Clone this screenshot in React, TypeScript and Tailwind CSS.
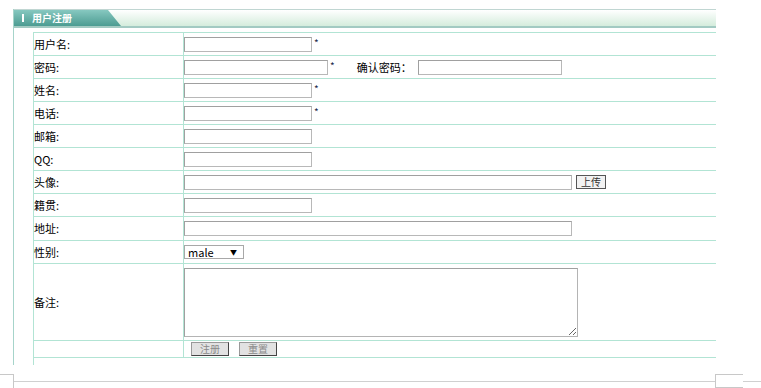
import React from "react";

const font = { fontFamily: '"Noto Sans CJK SC", "Liberation Sans", sans-serif' };

function Row({ label, h = "h-[23px]", children }: { label: string; h?: string; children?: React.ReactNode }) {
  return (
    <div className={`flex ${h} border-b border-[#b2e4d4]`}>
      <div className="flex w-[149px] items-center text-[11px] text-black">{label}</div>
      <div className="flex flex-1 items-center border-l border-[#b2e4d4]">{children}</div>
    </div>
  );
}

function Field({ w }: { w: string }) {
  return (
    <input
      className={`${w} h-[15px] border border-[#b8b8b8] border-l-[#a0a0a0] border-t-[#a0a0a0] bg-white outline-none`}
    />
  );
}

function Star() {
  return <span className="ml-[2px] -mt-[2px] text-[10px] leading-none text-[#1a2a4a]">*</span>;
}

export default function App() {
  return (
    <div className="relative h-[388px] w-[761px] overflow-hidden bg-white pt-[9px]" style={font}>
      <div className="ml-[13px] h-[356px] w-[703px] border-l border-[#a6d4ca]">
        {/* title bar */}
        <div className="flex h-[19px] border-t border-b-2 border-t-[#c0d6d2] border-b-[#a2cac2] bg-gradient-to-b from-white to-[#d4ecdc]">
          <div className="flex h-full w-[107px] items-center bg-gradient-to-b from-[#86c8c0] to-[#4c9c92] pl-[8px] [clip-path:polygon(0_0,94px_0,107px_100%,0_100%)]">
            <span className="h-[8px] w-[2px] bg-white" />
            <span className="ml-[8px] text-[10px] font-bold leading-none text-white">用户注册</span>
          </div>
        </div>

        {/* form table */}
        <div className="ml-[19px] mt-[4px] h-[333px] border-l border-t border-[#b2e4d4]">
          <Row label="用户名:">
            <Field w="w-[128px]" />
            <Star />
          </Row>
          <Row label="密码:">
            <Field w="w-[144px]" />
            <Star />
            <span className="ml-[22px] text-[11px]">确认密码：</span>
            <span className="ml-[6px] flex">
              <Field w="w-[144px]" />
            </span>
          </Row>
          <Row label="姓名:">
            <Field w="w-[128px]" />
            <Star />
          </Row>
          <Row label="电话:">
            <Field w="w-[128px]" />
            <Star />
          </Row>
          <Row label="邮箱:">
            <Field w="w-[128px]" />
          </Row>
          <Row label="QQ:">
            <Field w="w-[128px]" />
          </Row>
          <Row label="头像:">
            <Field w="w-[388px]" />
            <button className="ml-[4px] flex h-[14px] w-[30px] items-center justify-center border border-[#555] bg-[#f2f2f2] text-[10px] leading-none text-[#333]">
              上传
            </button>
          </Row>
          <Row label="籍贯:">
            <Field w="w-[128px]" />
          </Row>
          <Row label="地址:" h="h-[24px]">
            <Field w="w-[388px]" />
          </Row>
          <Row label="性别:">
            <div className="flex h-[14px] w-[60px] items-center justify-between border border-[#a8a8a8] bg-white pl-[3px] pr-[6px] text-[11px] leading-none text-black">
              <span>male</span>
              <span className="text-[7px]">▼</span>
            </div>
          </Row>
          <Row label="备注:" h="h-[77px]">
            <textarea className="h-[69px] w-[394px] border border-[#b4b4b4] border-l-[#a0a0a0] border-t-[#a0a0a0] bg-white outline-none" />
          </Row>
          <Row label="" h="h-[17px]">
            <button className="ml-[7px] flex h-[14px] w-[38px] items-center justify-center border border-[#444] border-l-[#999] border-t-[#999] bg-[#e2e2e2] text-[10px] leading-none text-[#8a8a8a]">
              注册
            </button>
            <button className="ml-[10px] flex h-[14px] w-[38px] items-center justify-center border border-[#444] border-l-[#999] border-t-[#999] bg-[#e2e2e2] text-[10px] leading-none text-[#8a8a8a]">
              重置
            </button>
          </Row>
        </div>
      </div>

      {/* frame edges at the bottom */}
      <div className="mt-[9px] flex h-[14px]">
        <div className="w-[14px] border-r border-t border-[#c8c8c8]" />
        <div className="flex-1">
          <div className="mt-[7px] border-t border-[#d0d0d0]" />
        </div>
        <div className="w-[28px] border-b border-l border-t border-[#c8c8c8]" />
        <div className="w-[18px]">
          <div className="mt-[7px] border-t border-[#d0d0d0]" />
        </div>
      </div>
    </div>
  );
}
